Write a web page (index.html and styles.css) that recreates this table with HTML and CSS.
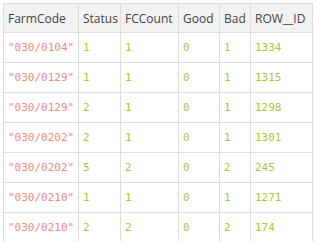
FILE: index.html
```html
<!DOCTYPE html>
<html>
<head>
<meta charset="utf-8">
<link rel="stylesheet" href="styles.css">
</head>
<body>
<table class="grid">
  <colgroup>
    <col class="c1"><col class="c2"><col class="c3"><col class="c4"><col class="c5"><col class="c6">
  </colgroup>
  <thead>
    <tr><th>FarmCode</th><th>Status</th><th>FCCount</th><th>Good</th><th>Bad</th><th>ROW__ID</th></tr>
  </thead>
  <tbody>
    <tr><td class="str">"030/0104"</td><td class="num">1</td><td class="num">1</td><td class="num">0</td><td class="num">1</td><td class="num">1334</td></tr>
    <tr><td class="str">"030/0129"</td><td class="num">1</td><td class="num">1</td><td class="num">0</td><td class="num">1</td><td class="num">1315</td></tr>
    <tr><td class="str">"030/0129"</td><td class="num">2</td><td class="num">1</td><td class="num">0</td><td class="num">1</td><td class="num">1298</td></tr>
    <tr><td class="str">"030/0202"</td><td class="num">2</td><td class="num">1</td><td class="num">0</td><td class="num">1</td><td class="num">1301</td></tr>
    <tr><td class="str">"030/0202"</td><td class="num">5</td><td class="num">2</td><td class="num">0</td><td class="num">2</td><td class="num">245</td></tr>
    <tr><td class="str">"030/0210"</td><td class="num">1</td><td class="num">1</td><td class="num">0</td><td class="num">1</td><td class="num">1271</td></tr>
    <tr><td class="str">"030/0210"</td><td class="num">2</td><td class="num">2</td><td class="num">0</td><td class="num">2</td><td class="num">174</td></tr>
  </tbody>
</table>
</body>
</html>
```
FILE: styles.css
```css
html, body {
  margin: 0;
  background: #ffffff;
}
body {
  padding: 3px;
}
.grid {
  border-collapse: collapse;
  table-layout: fixed;
  width: 310px;
}
.c1 { width: 75px; }
.c2 { width: 42px; }
.c3 { width: 58px; }
.c4 { width: 41px; }
.c5 { width: 31px; }
.c6 { width: 62px; }
.grid th, .grid td {
  border: 1px solid #dddddd;
  padding: 0 4px;
  text-align: left;
  white-space: nowrap;
  overflow: hidden;
}
.grid th {
  background: #f2f2f2;
  font-family: "Open Sans", sans-serif;
  font-weight: normal;
  font-size: 12px;
  color: #444444;
  height: 28px;
}
.grid td {
  font-family: "DejaVu Sans Mono", monospace;
  font-size: 11px;
  height: 29px;
}
.str { color: #f08a84; }
.num { color: #a9c63c; }
```
